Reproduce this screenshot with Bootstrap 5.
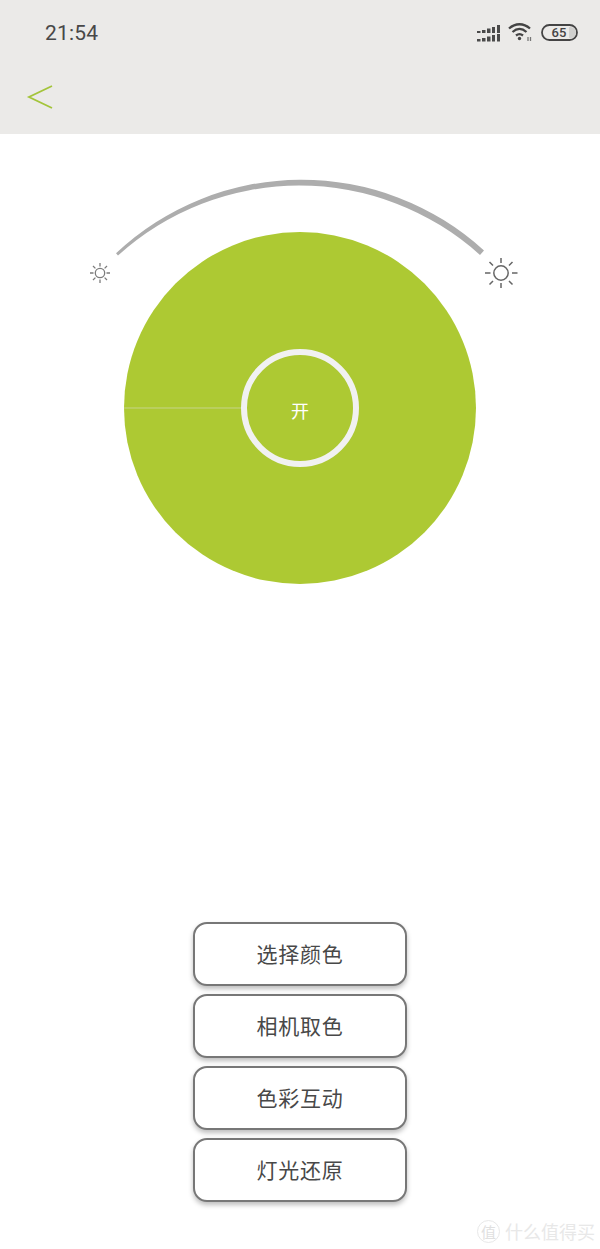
<!DOCTYPE html>
<html lang="zh">
<head>
<meta charset="utf-8">
<title>灯光</title>
<link href="https://cdn.jsdelivr.net/npm/bootstrap@5.3.0/dist/css/bootstrap.min.css" rel="stylesheet">
<style>
html,body{margin:0;height:1249px;overflow:hidden;background:#fff;}
body{font-family:"Roboto","Noto Sans CJK SC",sans-serif;}
.app-screen{height:1249px;}
.top-bar{height:134px;background:#ebeae8;flex:none;}
.status-row{height:66px;padding:0 22px 0 45px;}
.clock{font-size:21px;line-height:1;color:#484848;letter-spacing:.2px;}
.status-icons{gap:8px;}
.lift-one{margin-bottom:2px;}
.back-row{padding-left:26px;height:68px;padding-bottom:6px;}
.dial-stage{height:456px;flex:none;}
.dial-art{display:block;}
.power-ring{left:241px;top:215px;width:118px;height:118px;border:6px solid #f1f1f1;color:#fff;font-size:18px;font-family:"Noto Sans CJK SC",sans-serif;padding:4px 0 0;}
.action-stack{margin-top:332px;width:214px;gap:8px;}
.action-btn{height:64px;background:#fff;border:2px solid #777;border-radius:14px;box-shadow:0 3px 5px rgba(0,0,0,.26);font-family:"Noto Sans CJK SC",sans-serif;font-size:21px;font-weight:400;color:#484848;padding:0;letter-spacing:.8px;}
.action-btn:hover{background:#fff;color:#484848;border-color:#777;}
.water-mark{right:5px;bottom:6px;color:#e8e8e8;font-family:"Noto Sans CJK SC",sans-serif;font-size:18px;line-height:24px;gap:5px;}
.water-seal{width:23px;height:23px;border:1.5px solid #e8e8e8;font-size:15px;line-height:1;color:#e0e0e0;}
</style>
</head>
<body>
<div class="app-screen position-relative d-flex flex-column">
  <header class="top-bar">
    <div class="status-row d-flex align-items-center justify-content-between">
      <span class="clock">21:54</span>
      <div class="status-icons d-flex align-items-center">
        <svg width="23" height="17" viewBox="0 0 23 17" fill="#4a4a4a"><rect x="0" y="6" width="3.500" height="2"/><rect x="5" y="5" width="3.500" height="3"/><rect x="10" y="3.500" width="3.500" height="4.500"/><rect x="15" y="2" width="3" height="6"/><rect x="20" y="0" width="3" height="8"/><rect x="0" y="14" width="3.500" height="2.500"/><rect x="5" y="13" width="3.500" height="3.500"/><rect x="10" y="11.500" width="3.500" height="5"/><rect x="15" y="10" width="3" height="6.500"/><rect x="20" y="9" width="3" height="7.500"/></svg>
        <svg class="lift-one" width="25" height="20" viewBox="0 0 25 20" fill="none" stroke="#444" stroke-width="2.300"><path d="M1 6.500C7.500 .8 15.500 .8 22 6.500"/><path d="M4.500 10C9 6 14 6 18.500 10"/><path d="M8 13.500C10.500 11.500 12.500 11.500 15 13.500"/><circle cx="11.500" cy="16.500" r="1.700" fill="#444" stroke="none"/><path d="M20 15v4M22.500 15v4" stroke-width="1.300" stroke="#777"/></svg>
        <svg class="lift-one" width="37" height="17" viewBox="0 0 37 17"><rect x="1" y="1" width="35" height="15" rx="7.500" fill="#ebeae8" stroke="#444" stroke-width="1.800"/><path d="M28 3h1.500a5.500 5.500 0 0 1 0 11H28z" fill="#d0d0ce"/><text x="18" y="13" text-anchor="middle" font-family="Roboto,sans-serif" font-size="13" font-weight="500" fill="#444">65</text></svg>
      </div>
    </div>
    <div class="back-row d-flex align-items-center">
      <svg width="28" height="26" viewBox="0 0 28 26" fill="none" stroke="#a3c43a" stroke-width="1.800"><path d="M26 2L3 13l23 11"/></svg>
    </div>
  </header>

  <main class="d-flex flex-column align-items-center">
    <div class="dial-stage position-relative w-100">
      <svg class="dial-art" width="600" height="456" viewBox="0 134 600 456">
        <circle cx="300" cy="408" r="176" fill="#adc933"/>
        <path d="M124 408H243" stroke="#c6d48a" stroke-width="1"/>
        <path d="M116 253.300A270.600 270.600 0 0 1 484 250.500L480 255A269.800 269.800 0 0 0 118 255.600Z" fill="#adadad"/>
        <g fill="none" stroke="#7c7c7c" stroke-width="1.300">
          <circle cx="100" cy="273" r="4.700"/>
          <path d="M100 263v3.500M100 279.500v3.500M90 273h3.500M106.500 273h3.500M93 266l2.400 2.400M104.600 277.600l2.400 2.400M107 266l-2.400 2.400M95.400 277.600L93 280"/>
        </g>
        <g fill="none" stroke="#666" stroke-width="1.500">
          <circle cx="501" cy="273" r="7.200"/>
          <path d="M501 258v5M501 283v5M485 273h5.500M512 273h5.500M489.500 262l3.500 3.500M509 281l3.500 3.500M512.500 262L509 265.500M493 281l-3.500 3.500"/>
        </g>
      </svg>
      <button type="button" class="power-ring btn position-absolute rounded-circle d-flex align-items-center justify-content-center">开</button>
    </div>
    <div class="action-stack d-flex flex-column">
      <button type="button" class="action-btn btn">选择颜色</button>
      <button type="button" class="action-btn btn">相机取色</button>
      <button type="button" class="action-btn btn">色彩互动</button>
      <button type="button" class="action-btn btn">灯光还原</button>
    </div>
  </main>

  <div class="water-mark position-absolute d-flex align-items-center">
    <span class="water-seal rounded-circle d-flex align-items-center justify-content-center">值</span>
    <span>什么值得买</span>
  </div>
</div>
<script src="https://cdn.jsdelivr.net/npm/bootstrap@5.3.0/dist/js/bootstrap.bundle.min.js"></script>
</body>
</html>
